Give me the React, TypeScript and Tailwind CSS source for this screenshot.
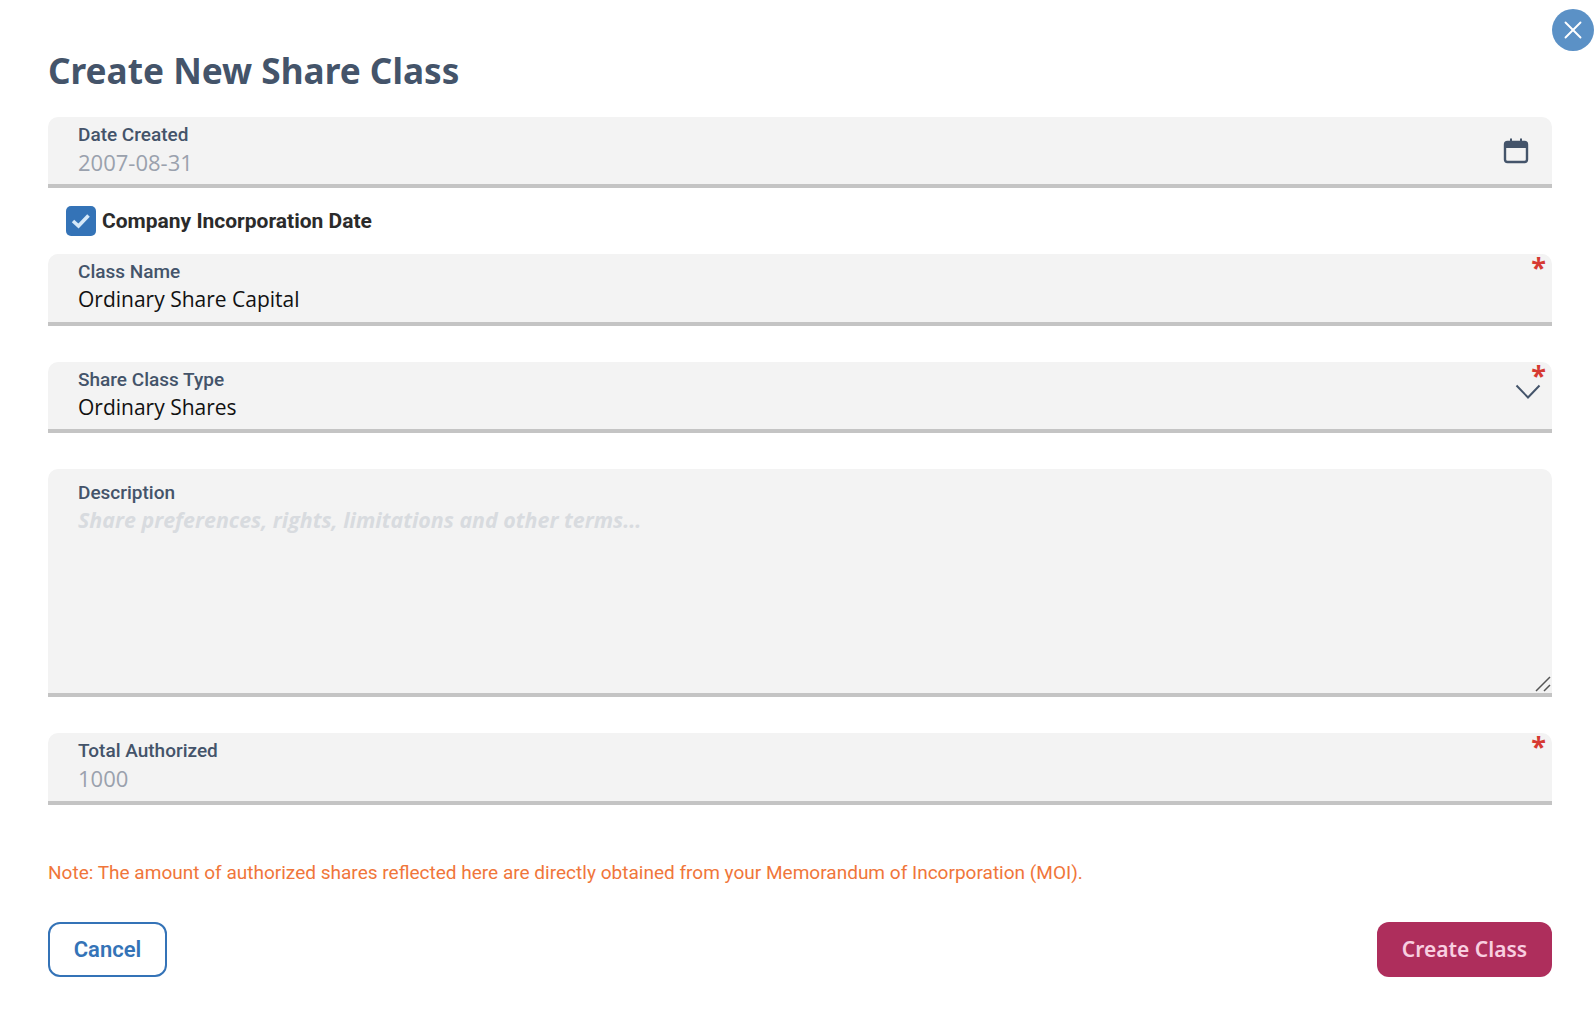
import React from "react";
import { X } from "lucide-react";

const Label = ({ children }: { children: React.ReactNode }) => (
  <p className="font-['Roboto',sans-serif] text-[19px] leading-[22px] font-medium text-[#44546a]">
    {children}
  </p>
);

const Star = () => (
  <span className="absolute right-[6px] top-[-1px] text-[27px] leading-[27px] font-bold text-[#d63a32]">
    *
  </span>
);

const Field = ({
  label,
  value,
  muted,
  required,
  children,
  className = "",
}: {
  label: string;
  value: string;
  muted?: boolean;
  required?: boolean;
  children?: React.ReactNode;
  className?: string;
}) => (
  <div
    className={`relative rounded-t-[10px] bg-[#f3f3f3] border-b-4 border-[#c4c4c4] pl-[30px] pt-[7px] ${className}`}
  >
    <Label>{label}</Label>
    <p
      className={`mt-[2px] leading-[28px] ${
        muted ? "text-[22px] text-[#9aa1ad]" : "text-[21px] text-[#111]"
      }`}
    >
      {value}
    </p>
    {required && <Star />}
    {children}
  </div>
);

export default function App() {
  return (
    <div className="font-['Open_Sans',sans-serif] w-[1596px] h-[1018px] bg-white relative overflow-hidden">
      <button className="absolute right-[2px] top-[9px] w-[42px] h-[42px] rounded-full bg-[#5b91c6] flex items-center justify-center text-white">
        <X className="w-[30px] h-[30px]" strokeWidth={1.5} />
      </button>
      <div className="flex flex-col pl-[48px] pr-[44px] pt-[46px]">
        <h1 className="text-[35.2px] leading-[48px] font-bold text-[#44546a] font-['Noto_Sans',sans-serif]">
          Create New Share Class
        </h1>
        <Field label="Date Created" value="2007-08-31" muted className="mt-[23px] h-[71px]">
          <svg
            className="absolute right-[22px] top-[20px]"
            width="28"
            height="28"
            viewBox="0 0 28 28"
            fill="none"
          >
            <rect x="3" y="5" width="22" height="20" rx="2.5" stroke="#44546a" strokeWidth="2.4" />
            <rect x="3" y="5" width="22" height="6" fill="#44546a" />
            <rect x="8" y="1.5" width="2" height="5" fill="#44546a" />
            <rect x="18" y="1.5" width="2" height="5" fill="#44546a" />
          </svg>
        </Field>
        <div className="flex items-center gap-[6px] pl-[18px] h-[66px]">
          <span className="w-[30px] h-[30px] rounded-[5px] bg-[#3473b7] flex items-center justify-center">
            <svg width="20" height="20" viewBox="0 0 20 20" fill="none">
              <path d="M2 10 L7.5 15 L17.5 4.5" stroke="#d5e8f8" strokeWidth="3.6" />
            </svg>
          </span>
          <span className="mt-[2px] font-['Roboto',sans-serif] text-[21px] font-bold text-[#2b2b2b]">
            Company Incorporation Date
          </span>
        </div>
        <Field label="Class Name" value="Ordinary Share Capital" required className="h-[72px]" />
        <Field
          label="Share Class Type"
          value="Ordinary Shares"
          required
          className="mt-[36px] h-[71px]"
        >
          <svg
            className="absolute right-[11px] top-[22px]"
            width="26"
            height="16"
            viewBox="0 0 26 16"
            fill="none"
          >
            <path d="M1.5 1.5 L13 13.5 L24.5 1.5" stroke="#44546a" strokeWidth="2" />
          </svg>
        </Field>
        <div className="relative mt-[36px] h-[228px] rounded-t-[10px] bg-[#f3f3f3] border-b-4 border-[#c4c4c4] pl-[30px] pt-[13px]">
          <Label>Description</Label>
          <p className="mt-[2px] text-[21.4px] leading-[28px] italic font-bold text-[#d8dbdf]">
            Share preferences, rights, limitations and other terms...
          </p>
          <svg className="absolute right-[1px] bottom-[1px]" width="16" height="16" viewBox="0 0 16 16">
            <path d="M1 15 L15 1 M9 15 L15 9" stroke="#555" strokeWidth="1.5" />
          </svg>
        </div>
        <Field label="Total Authorized" value="1000" muted required className="mt-[36px] h-[72px]" />
        <p className="mt-[56px] font-['Roboto',sans-serif] text-[19.05px] leading-[24px] text-[#f0763a]">
          Note: The amount of authorized shares reflected here are directly obtained from your
          Memorandum of Incorporation (MOI).
        </p>
        <div className="mt-[37px] flex justify-between">
          <button className="w-[119px] h-[55px] rounded-[12px] border-2 border-[#3473b7] font-['Roboto',sans-serif] text-[22px] font-semibold text-[#3473b7]">
            Cancel
          </button>
          <button className="w-[175px] h-[55px] rounded-[12px] bg-[#ae2e5c] font-['Noto_Sans',sans-serif] text-[21px] font-semibold text-[#f8cfe0]">
            Create Class
          </button>
        </div>
      </div>
    </div>
  );
}
